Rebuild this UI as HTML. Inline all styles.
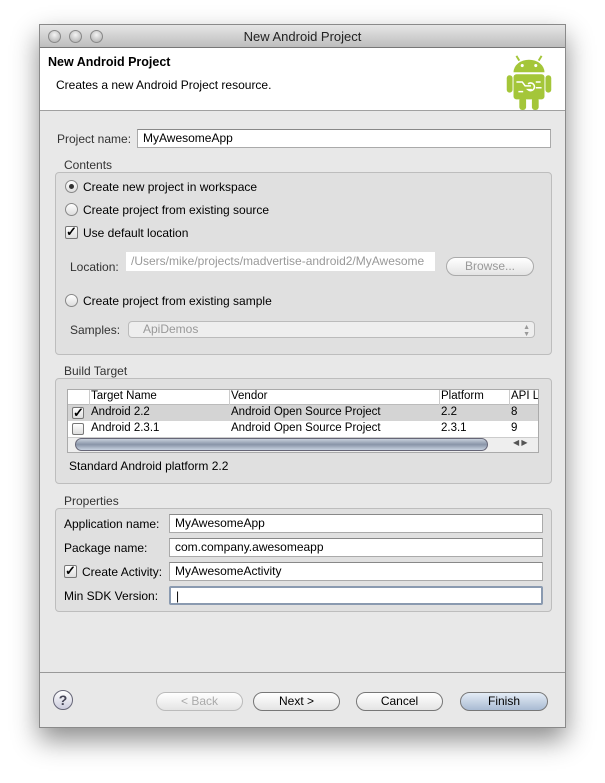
<!DOCTYPE html>
<html><head><style>
*{box-sizing:border-box;margin:0;padding:0}
body{width:605px;height:783px;background:#fff;font-family:"Liberation Sans",sans-serif;font-size:12px;color:#000;position:relative;overflow:hidden}
.a{position:absolute}
.win{left:39px;top:24px;width:527px;height:704px;background:#e8e8e8;border:1px solid #8a8a8a;box-shadow:0 12px 25px rgba(0,0,0,.45)}
.title{left:0;top:0;width:525px;height:23px;background:linear-gradient(#e6e6e6,#bdbdbd);border-bottom:1px solid #777;text-align:center;font-size:13px;line-height:23px;color:#222}
.dot{width:13px;height:13px;border-radius:50%;background:radial-gradient(circle at 50% 35%,#f4f4f4,#a9a9a9);border:1px solid #888;top:5px}
.hdr{left:0;top:23px;width:525px;height:63px;background:#fff;border-bottom:1px solid #a0a0a0}
.grp{border:1px solid #bdbdbd;border-radius:4px;background:#e0e0e0}
.lbl{color:#333}
.tf{background:#fff;border:1px solid #aaa;border-top-color:#888;height:19px;line-height:17px;padding-left:5px}
.rad{width:13px;height:13px;border-radius:50%;border:1px solid #888;background:linear-gradient(#fff,#ddd)}
.chk{width:13px;height:13px;border:1px solid #777;border-radius:2px;background:linear-gradient(#fff,#ddd);font-size:13px;line-height:10px;text-align:center;font-weight:bold}
.btn{height:19px;border:1px solid #777;border-radius:10px;background:linear-gradient(#fff,#e4e4e4);text-align:center;line-height:17px;font-size:12px}
.tb{font-size:11.5px;overflow:hidden}
</style></head><body>
<div class="a win">
 <div class="a title">New Android Project</div>
 <div class="a dot" style="left:8px"></div><div class="a dot" style="left:29px"></div><div class="a dot" style="left:50px"></div>
 <div class="a hdr">
  <div class="a" style="left:8px;top:7px;font-weight:bold;font-size:12.5px">New Android Project</div>
  <div class="a" style="left:16px;top:30px">Creates a new Android Project resource.</div>
  <svg class="a" style="left:466px;top:3px" width="46" height="60" viewBox="0 0 46 62">
   <g fill="#a4c639"><path d="M10 5l3 5M36 5l-3 5" stroke="#a4c639" stroke-width="2"/><path d="M7 22a16 13 0 0 1 32 0z"/><rect x="7" y="24" width="32" height="26" rx="3"/><rect x="0" y="25" width="6" height="18" rx="3"/><rect x="40" y="25" width="6" height="18" rx="3"/><rect x="13" y="48" width="7" height="13" rx="3"/><rect x="26" y="48" width="7" height="13" rx="3"/></g>
   <circle cx="16" cy="15" r="1.6" fill="#fff"/><circle cx="30" cy="15" r="1.6" fill="#fff"/>
   <path d="M10 32h6l3 4h6M22 34a4 4 0 1 1 0 6h4M30 32h5M30 38h6M12 42h5" stroke="#fff" stroke-width="1.6" fill="none"/>
  </svg>
 </div>
 <div class="a lbl" style="left:17px;top:107px">Project name:</div>
 <div class="a tf" style="left:97px;top:104px;width:414px">MyAwesomeApp</div>
 <div class="a lbl" style="left:24px;top:133px">Contents</div>
 <div class="a grp" style="left:15px;top:147px;width:497px;height:183px"></div>
 <div class="a rad" style="left:25px;top:155px"><div style="width:5px;height:5px;border-radius:50%;background:#333;margin:3px"></div></div>
 <div class="a" style="left:43px;top:155px">Create new project in workspace</div>
 <div class="a rad" style="left:25px;top:178px"></div>
 <div class="a" style="left:43px;top:178px">Create project from existing source</div>
 <div class="a chk" style="left:25px;top:201px">✓</div>
 <div class="a" style="left:43px;top:201px">Use default location</div>
 <div class="a lbl" style="left:30px;top:235px">Location:</div>
 <div class="a" style="left:86px;top:227px;width:309px;height:19px;background:#fff;color:#999;line-height:19px;padding-left:5px;overflow:hidden;white-space:nowrap">/Users/mike/projects/madvertise-android2/MyAwesome</div>
 <div class="a btn" style="left:406px;top:232px;width:88px;color:#999;border-color:#aaa">Browse...</div>
 <div class="a rad" style="left:25px;top:269px"></div>
 <div class="a" style="left:43px;top:269px">Create project from existing sample</div>
 <div class="a lbl" style="left:30px;top:298px">Samples:</div>
 <div class="a" style="left:88px;top:296px;width:407px;height:17px;border:1px solid #bbb;border-radius:4px;background:#eee;color:#999;line-height:15px;padding-left:14px">ApiDemos<span style="position:absolute;right:4px;font-size:7px;line-height:7px;top:2px">▲<br>▼</span></div>
 <div class="a lbl" style="left:24px;top:339px">Build Target</div>
 <div class="a grp" style="left:15px;top:353px;width:497px;height:106px"></div>
 <div class="a tb" style="left:27px;top:364px;width:472px;height:64px;background:#fff;border:1px solid #aaa">
  <div class="a" style="left:0;top:0;width:470px;height:15px;border-bottom:1px solid #bbb;background:#fff"></div>
  <div class="a" style="left:21px;top:0;width:1px;height:15px;background:#ccc"></div>
  <div class="a" style="left:161px;top:0;width:1px;height:15px;background:#ccc"></div>
  <div class="a" style="left:371px;top:0;width:1px;height:15px;background:#ccc"></div>
  <div class="a" style="left:441px;top:0;width:1px;height:15px;background:#ccc"></div>
  <div class="a" style="left:23px;top:0">Target Name</div><div class="a" style="left:163px;top:0">Vendor</div><div class="a" style="left:373px;top:0">Platform</div><div class="a" style="left:443px;top:0;white-space:nowrap">API L</div>
  <div class="a" style="left:0;top:15px;width:470px;height:16px;background:#d4d4d4"></div>
  <div class="a chk" style="left:4px;top:17px;width:12px;height:12px">✓</div>
  <div class="a" style="left:23px;top:16px">Android 2.2</div><div class="a" style="left:163px;top:16px">Android Open Source Project</div><div class="a" style="left:373px;top:16px">2.2</div><div class="a" style="left:443px;top:16px">8</div>
  <div class="a chk" style="left:4px;top:33px;width:12px;height:12px"></div>
  <div class="a" style="left:23px;top:32px">Android 2.3.1</div><div class="a" style="left:163px;top:32px">Android Open Source Project</div><div class="a" style="left:373px;top:32px">2.3.1</div><div class="a" style="left:443px;top:32px">9</div>
  <div class="a" style="left:0;top:47px;width:470px;height:15px;background:#eee;border-top:1px solid #ccc"></div>
  <div class="a" style="left:7px;top:48px;width:413px;height:13px;border-radius:7px;border:1px solid #667;background:linear-gradient(#c8d0dc,#8894a8 50%,#c8d2e0)"></div>
  <div class="a" style="left:445px;top:48px;font-size:8px;color:#555">◀ ▶</div>
 </div>
 <div class="a" style="left:29px;top:434px">Standard Android platform 2.2</div>
 <div class="a lbl" style="left:24px;top:469px">Properties</div>
 <div class="a grp" style="left:15px;top:483px;width:497px;height:104px"></div>
 <div class="a" style="left:24px;top:492px">Application name:</div>
 <div class="a tf" style="left:129px;top:489px;width:374px">MyAwesomeApp</div>
 <div class="a" style="left:24px;top:516px">Package name:</div>
 <div class="a tf" style="left:129px;top:513px;width:374px">com.company.awesomeapp</div>
 <div class="a chk" style="left:24px;top:540px">✓</div>
 <div class="a" style="left:42px;top:540px">Create Activity:</div>
 <div class="a tf" style="left:129px;top:537px;width:374px">MyAwesomeActivity</div>
 <div class="a" style="left:24px;top:564px">Min SDK Version:</div>
 <div class="a tf" style="left:129px;top:561px;width:374px;border:2px solid #8a9ab0;border-radius:2px">|</div>
 <div class="a" style="left:0;top:647px;width:525px;height:1px;background:#999"></div>
 <div class="a" style="left:13px;top:665px;width:20px;height:20px;border-radius:50%;border:1px solid #667;background:linear-gradient(#fff,#ccd);text-align:center;line-height:18px;font-weight:bold;font-size:14px;color:#445">?</div>
 <div class="a btn" style="left:116px;top:667px;width:87px;color:#aaa;border-color:#bbb">&lt; Back</div>
 <div class="a btn" style="left:213px;top:667px;width:87px">Next &gt;</div>
 <div class="a btn" style="left:316px;top:667px;width:87px">Cancel</div>
 <div class="a btn" style="left:420px;top:667px;width:88px;background:linear-gradient(#e4ecf6,#a9bbd3)">Finish</div>
</div>
</body></html>
